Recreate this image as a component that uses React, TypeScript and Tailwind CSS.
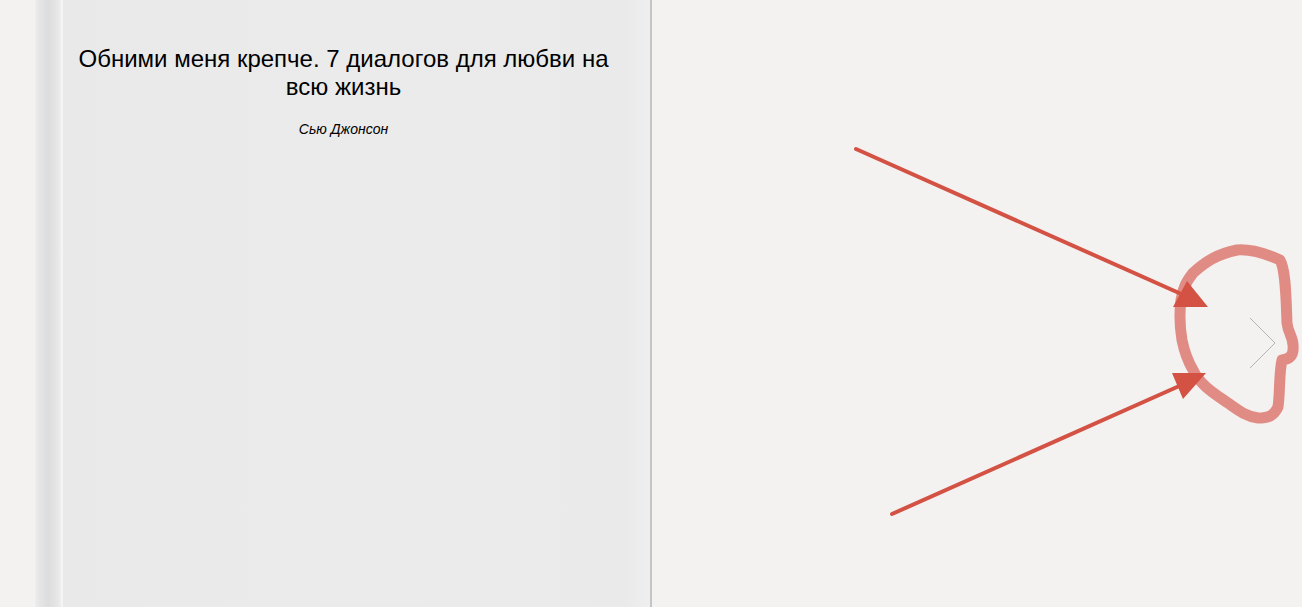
import React from 'react'

// обложка книги слева, листание вправо, поверх — красные пометки
function Annotations() {
  return (
    <svg className="pointer-events-none absolute inset-0" width="1302" height="607" viewBox="0 0 1302 607">
      <path
        d="M1193 273 C1205 262 1217 254 1237 250 C1250 249 1262 252 1280 260 C1286 270 1286 300 1287 323 C1288 333 1293 337 1293 345 C1294 355 1290 359 1282 360 C1279 372 1280 395 1278 407 C1274 415 1270 418 1258 418 C1245 416 1238 410 1228 403 C1215 394 1200 385 1193 370 C1186 358 1184 350 1182 340 C1180 328 1179 315 1181 300 C1183 288 1186 282 1193 273 Z"
        fill="none"
        stroke="#e08c85"
        strokeWidth="11"
        strokeLinejoin="round"
      />
      <line x1="856" y1="149" x2="1188" y2="297" stroke="#d35244" strokeWidth="4" strokeLinecap="round" />
      <polygon points="1173,307 1208,307 1187,281" fill="#d35244" />
      <line x1="892" y1="514" x2="1186" y2="383" stroke="#d35244" strokeWidth="4" strokeLinecap="round" />
      <polygon points="1172,373 1206,373 1183,399" fill="#d35244" />
    </svg>
  )
}

export default function App() {
  return (
    <div className="relative flex h-[607px] w-[1302px] overflow-hidden bg-[#f3f2f1] pl-[35px] font-['Liberation_Sans',Arial,sans-serif]">
      <div className="flex h-full w-[617px] shrink-0">
        {/* корешок */}
        <div className="h-full w-[28px] shrink-0 bg-[linear-gradient(to_right,#eeeeee_0px,#e6e6e6_4px,#dddddd_13px,#e3e3e3_20px,#ebebeb_25px,#f7f7f7_27px,#f2f2f2_28px)]" />
        <div className="flex h-full flex-1 flex-col items-center border-r-2 border-r-[#c4c4c4] bg-[linear-gradient(to_right,#e9e9e9,#ebebeb_50%,#eaeaea_96%,#efefef)] pl-[4px] pr-[30px] pt-[45px]">
          <h1 className="text-center text-[24px] leading-[28px] text-black">
            Обними меня крепче. 7 диалогов для любви на всю жизнь
          </h1>
          <p className="mt-[20px] text-[14px] leading-[16px] italic text-black">Сью Джонсон</p>
        </div>
      </div>

      <div className="relative flex-1">
        <svg className="absolute left-[597px] top-[317px]" width="28" height="52" viewBox="0 0 28 52">
          <polyline points="1,1 26,26 1,51" fill="none" stroke="#b5b5b5" strokeWidth="1" />
        </svg>
      </div>

      <Annotations />
    </div>
  )
}
